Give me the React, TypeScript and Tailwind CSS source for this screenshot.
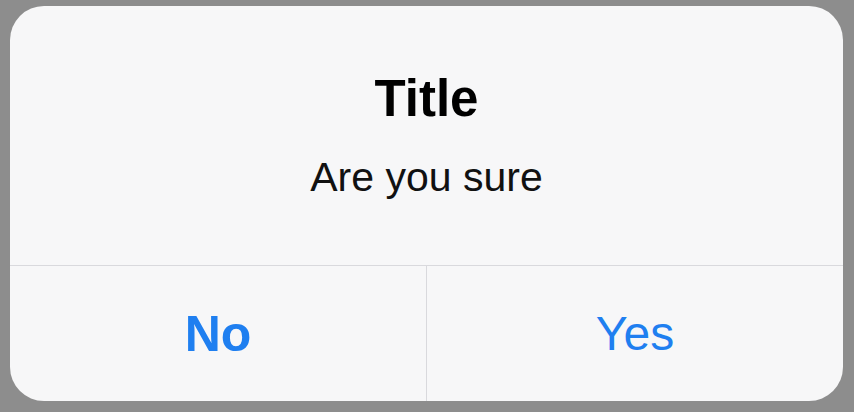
export default function App() {
  return (
    <div className="w-[854px] h-[412px] bg-[#8d8d8d] pt-[6px] pl-[10px] pr-[11px] pb-[11px] font-['Liberation_Sans',Arial,sans-serif]">
      <div className="flex h-full flex-col overflow-hidden rounded-[34px] bg-[#f7f7f8]">
        {/* Message */}
        <div className="flex h-[259px] flex-col items-center pt-[67px]">
          <h1 className="text-[51px] font-bold leading-none text-black">Title</h1>
          <p className="mt-[33px] text-[41px] leading-none text-[#111]">Are you sure</p>
        </div>

        {/* Actions */}
        <div className="flex flex-1 border-t border-[#d9d9dd]">
          <button className="flex flex-1 items-center justify-center text-[50px] font-bold leading-none text-[#1f7ff0]">
            No
          </button>
          <div className="w-px bg-[#d9d9dd]" />
          <button className="flex flex-1 items-center justify-center text-[48px] leading-none text-[#1f7ff0]">
            Yes
          </button>
        </div>
      </div>
    </div>
  );
}
